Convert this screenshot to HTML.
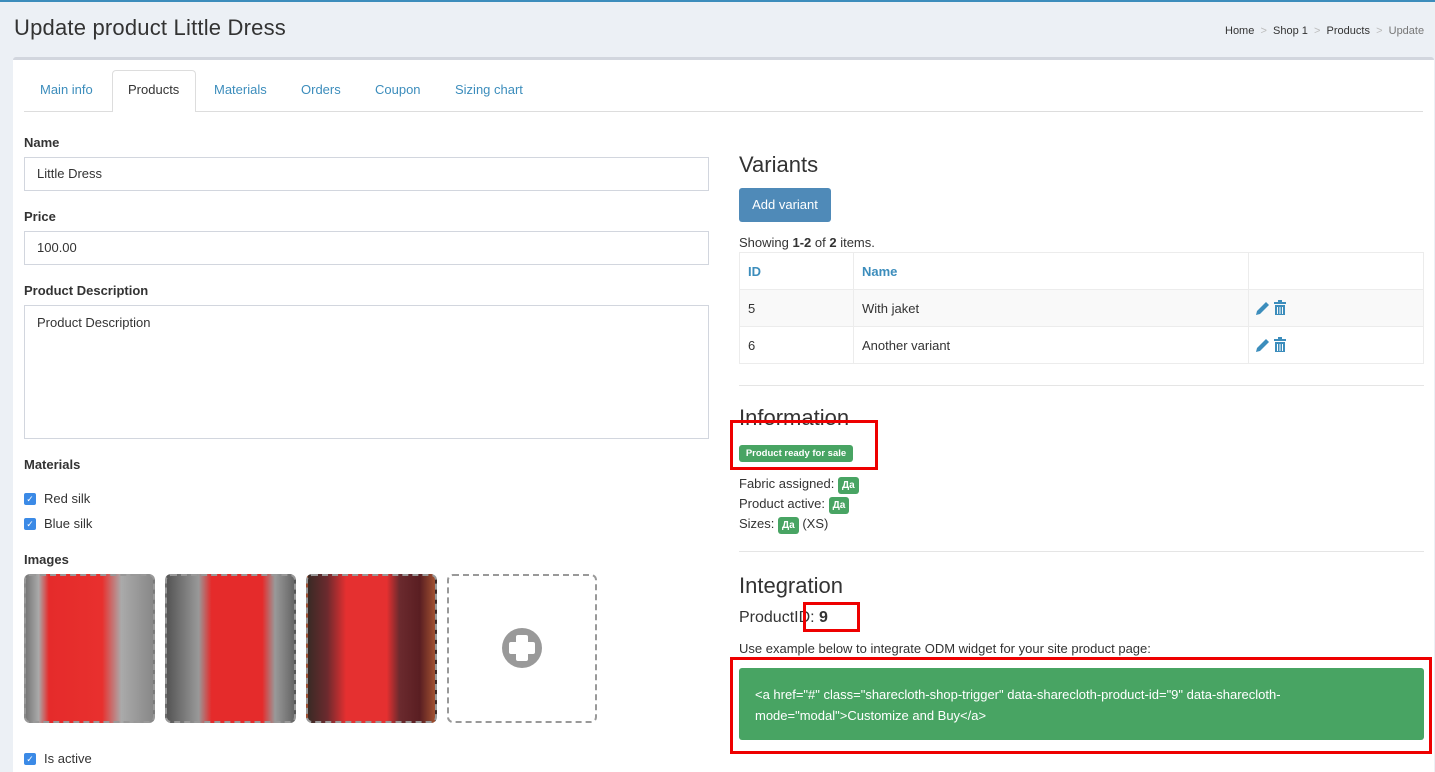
<!DOCTYPE html>
<html><head><meta charset="utf-8"><style>
*{box-sizing:border-box;margin:0;padding:0}
body{width:1435px;height:772px;overflow:hidden;background:#ecf0f5;font-family:"Liberation Sans",sans-serif;font-size:13px;color:#333;position:relative}
.a{position:absolute}
.lbl{font-weight:bold;font-size:13px;color:#333}
.inp{border:1px solid #d2d6de;background:#fff;padding:0 12px;font-size:13px}
.cb{width:12px;height:12px;background:#3b8ae6;border-radius:2px;color:#fff;font-size:9px;line-height:12px;text-align:center}
.badge{background:#48a463;color:#fff;font-weight:bold;font-size:10px;border-radius:3px;padding:0 4px;line-height:17px;display:inline-block}
.tab{position:absolute;top:82px;color:#3c8dbc;font-size:13px}
td{border:1px solid #ececec;padding:0 8px;height:37px}
</style></head><body>
<div class="a" style="left:0;top:0;width:1435px;height:2px;background:#3c8dbc"></div>
<div class="a" style="left:14px;top:15px;font-size:22px;color:#333;letter-spacing:0.2px">Update product Little Dress</div>
<div class="a" style="left:1225px;top:25px;font-size:11px;color:#333;white-space:nowrap">Home <span style="color:#bbb">&nbsp;&gt;&nbsp;</span> Shop 1 <span style="color:#bbb">&nbsp;&gt;&nbsp;</span> Products <span style="color:#bbb">&nbsp;&gt;&nbsp;</span> <span style="color:#777">Update</span></div>
<div class="a" style="left:13px;top:57px;width:1421px;height:715px;background:#fff;border-top:3px solid #d2d6de;border-radius:3px 3px 0 0"></div>
<div class="a" style="left:24px;top:111px;width:1399px;height:1px;background:#ddd"></div>
<div class="a" style="left:112px;top:70px;width:84px;height:42px;background:#fff;border:1px solid #ddd;border-bottom:none;border-radius:4px 4px 0 0"></div>
<div class="tab" style="left:40px">Main info</div>
<div class="tab" style="left:128px;color:#333">Products</div>
<div class="tab" style="left:214px">Materials</div>
<div class="tab" style="left:301px">Orders</div>
<div class="tab" style="left:375px">Coupon</div>
<div class="tab" style="left:455px">Sizing chart</div>

<div class="a lbl" style="left:24px;top:135px">Name</div>
<div class="a inp" style="left:24px;top:157px;width:685px;height:34px;line-height:32px">Little Dress</div>
<div class="a lbl" style="left:24px;top:209px">Price</div>
<div class="a inp" style="left:24px;top:231px;width:685px;height:34px;line-height:32px">100.00</div>
<div class="a lbl" style="left:24px;top:283px">Product Description</div>
<div class="a inp" style="left:24px;top:305px;width:685px;height:134px;padding-top:9px">Product Description</div>
<div class="a lbl" style="left:24px;top:457px">Materials</div>
<div class="a cb" style="left:24px;top:493px">✓</div><div class="a" style="left:44px;top:491px">Red silk</div>
<div class="a cb" style="left:24px;top:518px">✓</div><div class="a" style="left:44px;top:516px">Blue silk</div>
<div class="a lbl" style="left:24px;top:552px">Images</div>
<div class="a" style="left:24px;top:574px;width:131px;height:149px;border:2px dashed #999;border-radius:6px;background:linear-gradient(90deg,#777 0,#aaa 10%,#e52b2b 18%,#e8302e 60%,#aaa 75%,#888 100%)"></div>
<div class="a" style="left:165px;top:574px;width:131px;height:149px;border:2px dashed #999;border-radius:6px;background:linear-gradient(90deg,#555 0,#999 25%,#e52b2b 35%,#e52b2b 75%,#999 85%,#666 100%)"></div>
<div class="a" style="left:306px;top:574px;width:131px;height:149px;border:2px dashed #999;border-radius:6px;background:linear-gradient(90deg,#3a2a25 0,#6b2a2e 15%,#e53030 30%,#e53030 62%,#6b2a2e 72%,#5a1e22 88%,#a05030 100%)"></div>
<div class="a" style="left:447px;top:574px;width:150px;height:149px;border:2px dashed #999;border-radius:6px;background:#fff"></div>
<div class="a" style="left:502px;top:628px;width:40px;height:40px;border-radius:50%;background:#999"></div>
<div class="a" style="left:516px;top:635px;width:12px;height:26px;background:#fff;border-radius:2px"></div>
<div class="a" style="left:509px;top:642px;width:26px;height:12px;background:#fff;border-radius:2px"></div>
<div class="a cb" style="left:24px;top:753px">✓</div><div class="a" style="left:44px;top:751px">Is active</div>

<div class="a" style="left:739px;top:152px;font-size:22px">Variants</div>
<div class="a" style="left:739px;top:188px;width:92px;height:34px;background:#4f8ab8;border-radius:3px;color:#fff;text-align:center;line-height:34px">Add variant</div>
<div class="a" style="left:739px;top:235px">Showing <b>1-2</b> of <b>2</b> items.</div>
<table class="a" style="left:739px;top:252px;width:685px;border-collapse:collapse">
<tr><td style="width:114px;color:#3c8dbc;font-weight:bold">ID</td><td style="width:395px;color:#3c8dbc;font-weight:bold">Name</td><td></td></tr>
<tr style="background:#f9f9f9"><td>5</td><td>With jaket</td><td></td></tr>
<tr><td>6</td><td>Another variant</td><td></td></tr>
</table>
<svg class="a" style="left:1255px;top:299px" width="32" height="18" viewBox="0 0 32 18"><path d="M1 16 L2 12 L11 3 L14 6 L5 15 Z" fill="#3c8dbc"/><g fill="#3c8dbc"><rect x="19" y="3" width="12" height="2"/><rect x="23" y="1" width="4" height="2"/><path d="M20 6h10v10h-10z M22 8v7h1v-7z M24.5 8v7h1v-7z M27 8v7h1v-7z" fill-rule="evenodd"/></g></svg>
<svg class="a" style="left:1255px;top:336px" width="32" height="18" viewBox="0 0 32 18"><path d="M1 16 L2 12 L11 3 L14 6 L5 15 Z" fill="#3c8dbc"/><g fill="#3c8dbc"><rect x="19" y="3" width="12" height="2"/><rect x="23" y="1" width="4" height="2"/><path d="M20 6h10v10h-10z M22 8v7h1v-7z M24.5 8v7h1v-7z M27 8v7h1v-7z" fill-rule="evenodd"/></g></svg>
<div class="a" style="left:739px;top:385px;width:685px;height:1px;background:#e5e5e5"></div>
<div class="a" style="left:739px;top:405px;font-size:22px">Information</div>
<div class="a" style="left:730px;top:420px;width:148px;height:50px;border:3px solid #e00"></div>
<div class="a badge" style="left:739px;top:445px;font-size:9.5px;width:114px;text-align:center;padding:0">Product ready for sale</div>
<div class="a" style="left:739px;top:474px;line-height:20px">Fabric assigned: <span class="badge">Да</span><br>Product active: <span class="badge">Да</span><br>Sizes: <span class="badge">Да</span> (XS)</div>
<div class="a" style="left:739px;top:551px;width:685px;height:1px;background:#e5e5e5"></div>
<div class="a" style="left:739px;top:573px;font-size:22px">Integration</div>
<div class="a" style="left:739px;top:609px;font-size:16px">ProductID: <b>9</b></div>
<div class="a" style="left:803px;top:602px;width:57px;height:30px;border:3px solid #e00"></div>
<div class="a" style="left:739px;top:641px">Use example below to integrate ODM widget for your site product page:</div>
<div class="a" style="left:730px;top:657px;width:702px;height:97px;border:3px solid #e00"></div>
<div class="a" style="left:739px;top:668px;width:685px;height:72px;background:#48a463;border-radius:3px;color:#fff;padding:16px 16px;line-height:21px;font-size:13px">&lt;a href="#" class="sharecloth-shop-trigger" data-sharecloth-product-id="9" data-sharecloth-<br>mode="modal"&gt;Customize and Buy&lt;/a&gt;</div>
</body></html>
